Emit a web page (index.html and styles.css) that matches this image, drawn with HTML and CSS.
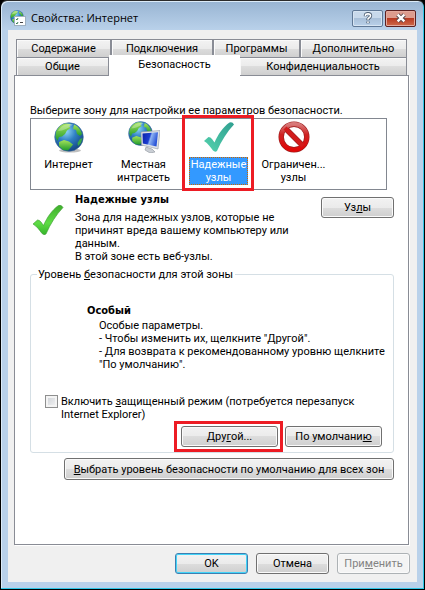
FILE: index.html
```html
<!DOCTYPE html>
<html lang="ru">
<head>
    <meta charset="UTF-8">
    <meta name="viewport" content="width=device-width, initial-scale=1.0">
    <title>Свойства: Интернет</title>
    <link rel="stylesheet" href="styles.css">
</head>
<body>

<!-- shared shapes -->
<svg class="defs" width="0" height="0" aria-hidden="true">
    <defs>
        <radialGradient id="sea" cx="0.4" cy="0.3" r="0.75">
            <stop offset="0" stop-color="#8fd6f5"/>
            <stop offset="0.45" stop-color="#2f7fc4"/>
            <stop offset="1" stop-color="#123f7c"/>
        </radialGradient>
        <linearGradient id="land" x1="0" y1="0" x2="0" y2="1">
            <stop offset="0" stop-color="#a5e35a"/>
            <stop offset="1" stop-color="#1f9a2c"/>
        </linearGradient>
        <linearGradient id="screen" x1="0" y1="0" x2="1" y2="0.3">
            <stop offset="0" stop-color="#0a1fa8"/>
            <stop offset="0.5" stop-color="#1c3fd0"/>
            <stop offset="0.6" stop-color="#8fb4f2"/>
            <stop offset="1" stop-color="#2a55d8"/>
        </linearGradient>
        <linearGradient id="teal" x1="0" y1="1" x2="1" y2="0">
            <stop offset="0" stop-color="#55d3ae"/>
            <stop offset="1" stop-color="#2f9f90"/>
        </linearGradient>
        <linearGradient id="green" x1="0" y1="0" x2="0" y2="1">
            <stop offset="0" stop-color="#3fae2c"/>
            <stop offset="0.6" stop-color="#5fdc45"/>
            <stop offset="1" stop-color="#35b52a"/>
        </linearGradient>
        <linearGradient id="red" x1="0" y1="0" x2="0" y2="1">
            <stop offset="0" stop-color="#d87a7a"/>
            <stop offset="0.4" stop-color="#cf2323"/>
            <stop offset="1" stop-color="#e00808"/>
        </linearGradient>
        <symbol id="globe" viewBox="0 0 30 30">
            <circle cx="15" cy="15" r="14.3" fill="url(#sea)" stroke="#3a6a9c" stroke-width="0.6"/>
            <path d="M2 10C4 5 8 2 12 1.500L17 2L15 4.500L16.500 6L13 8.500L11 12L8 14.500L5 15L3.500 19L1.500 15Z" fill="url(#land)"/>
            <path d="M20 2.500C24 4 27 8 28 12L26 14L23 12L22 8L19 7Z" fill="url(#land)"/>
            <path d="M5 20L10 18L15 19.500L19 22.500L17 25L14 28.500L9 28L5 24Z" fill="url(#land)"/>
            <path d="M26 17L28.500 16L27 21L24 24L23.500 21Z" fill="#38a84a"/>
            <path d="M4 9C7 3.500 13 1 19 2.500C15 6 9 9 4 9Z" fill="#ffffff" opacity="0.3"/>
        </symbol>
        <symbol id="tick" viewBox="0 0 32 32">
            <path d="M1 20L5.500 16Q7.500 16 9 18L11.500 21.500C15 13.500 20 6 26.500 1.500Q29.500 0.500 31 3.500C24 11 18.500 19.500 14 30Q12 31.500 10 29.500C7.500 26 5 22.500 1 20Z"/>
        </symbol>
    </defs>
</svg>

<div class="window">
    <header class="titlebar">
        <svg class="title-icon" viewBox="0 0 16 16" aria-hidden="true">
            <use href="#globe" x="0" y="0" width="14" height="14"/>
            <rect x="4.500" y="6.500" width="11" height="9" fill="#fff" stroke="#9fb0bf"/>
            <path d="M6 9l1 1 1-2M6 13l1 1 1-2" fill="none" stroke="#3d7f55"/>
            <path d="M10 12.500h3" stroke="#444"/>
        </svg>
        <h1 class="title">Свойства: Интернет</h1>
        <button class="caption-btn" type="button" aria-label="Справка">
            <svg width="14" height="12" viewBox="0 0 14 14">
                <path d="M4 5V4Q4 2 7 2T10 4.500Q10 6 8 7L7 8.500V9.500M7 11V13" fill="none" stroke="#4e5f73" stroke-width="3.800"/>
                <path d="M4 4.700V4Q4 2.200 7 2.200T10 4.500Q10 6 8 7L7 8V9M7 11.200V12.800" fill="none" stroke="#fff" stroke-width="1.800"/>
            </svg>
        </button>
        <button class="caption-btn close" type="button" aria-label="Закрыть">
            <svg width="12" height="10" viewBox="0 0 14 12">
                <path d="M3 2L11 10M11 2L3 10" stroke="#53464b" stroke-width="5"/>
                <path d="M3 2L11 10M11 2L3 10" stroke="#fff" stroke-width="2.800"/>
            </svg>
        </button>
    </header>

    <main class="client">
        <div class="tabs" role="tablist">
            <div class="tab-row back">
                <button class="tab" type="button" role="tab">Содержание</button>
                <button class="tab" type="button" role="tab">Подключения</button>
                <button class="tab" type="button" role="tab">Программы</button>
                <button class="tab" type="button" role="tab">Дополнительно</button>
            </div>
            <div class="tab-row front">
                <button class="tab" type="button" role="tab">Общие</button>
                <button class="tab selected" type="button" role="tab" aria-selected="true">Безопасность</button>
                <button class="tab" type="button" role="tab">Конфиденциальность</button>
            </div>
        </div>

        <section class="panel" role="tabpanel">
            <p class="prompt">Выберите зону для настройки ее параметров безопасности.</p>
            <ul class="zones">
                <li class="zone">
                    <svg class="zone-icon" viewBox="0 0 32 32" aria-hidden="true">
                        <ellipse cx="17" cy="29.500" rx="11" ry="2" fill="#000" opacity="0.25"/>
                        <use href="#globe" x="1" y="1" width="30" height="30"/>
                    </svg>
                    <span class="zone-name">Интернет</span>
                </li>
                <li class="zone">
                    <svg class="zone-icon" viewBox="0 0 32 32" aria-hidden="true">
                        <use href="#globe" x="0" y="0" width="25" height="25"/>
                        <path d="M18 26L24 28L27 31L22 32L17 29Z" fill="#c9ced4" stroke="#8d949c" stroke-width="0.600"/>
                        <path d="M13 11L32 9.500L30 28L13.500 24Z" fill="#dfe3e8" stroke="#9098a2" stroke-width="0.600"/>
                        <path d="M14.500 12.500L30 11.300L28.500 25.500L14.800 22.500Z" fill="url(#screen)"/>
                    </svg>
                    <span class="zone-name">Местная<br>интрасеть</span>
                </li>
                <li class="zone selected">
                    <svg class="zone-icon" viewBox="0 0 32 32" fill="url(#teal)" aria-hidden="true">
                        <use href="#tick" width="32" height="32"/>
                    </svg>
                    <span class="zone-name">Надежные<br>узлы</span>
                </li>
                <li class="zone">
                    <svg class="zone-icon" viewBox="0 0 32 32" fill="none" aria-hidden="true">
                        <circle cx="16" cy="16" r="12.800" fill="#fff" stroke="#9c1d1d" stroke-width="5.400"/>
                        <path d="M7 7L25 25" stroke="#9c1d1d" stroke-width="5.400"/>
                        <circle cx="16" cy="16" r="12.800" stroke="url(#red)" stroke-width="4.200"/>
                        <path d="M7 7L25 25" stroke="#d21c1c" stroke-width="4.200"/>
                    </svg>
                    <span class="zone-name">Ограничен...<br>узлы</span>
                </li>
            </ul>

            <div class="zone-info">
                <svg class="info-icon" viewBox="0 0 32 32" fill="url(#green)" stroke="#3a9a30" stroke-width="0.600" aria-hidden="true">
                    <use href="#tick" width="32" height="32"/>
                </svg>
                <div class="info-text">
                    <h2>Надежные узлы</h2>
                    <p>Зона для надежных узлов, которые не<br>причинят вреда вашему компьютеру или<br>данным.<br>В этой зоне есть веб-узлы.</p>
                </div>
                <button class="btn" type="button">Уз<u>л</u>ы</button>
            </div>

            <fieldset class="level">
                <legend>Уровень <u>б</u>езопасности для этой зоны</legend>
                <div class="level-text">
                    <h2>Особый</h2>
                    <p>Особые параметры.<br>- Чтобы изменить их, щелкните "Другой".<br>- Для возврата к рекомендованному уровню щелкните<br>"По умолчанию".</p>
                </div>
                <div class="protect">
                    <input type="checkbox" id="protect">
                    <label for="protect">Включить <u>з</u>ащищенный режим (потребуется перезапуск<br>Internet Explorer)</label>
                </div>
                <div class="level-buttons">
                    <button class="btn wide marked" type="button">Дру<u>г</u>ой...</button>
                    <button class="btn wide" type="button">По умолчани<u>ю</u></button>
                </div>
            </fieldset>
            <button class="btn reset-all" type="button"><u>В</u>ыбрать уровень безопасности по умолчанию для всех зон</button>
        </section>

        <footer class="actions">
            <button class="btn default" type="button">OK</button>
            <button class="btn" type="button">Отмена</button>
            <button class="btn" type="button" disabled>При<u>м</u>енить</button>
        </footer>
    </main>
</div>

</body>
</html>
```
FILE: styles.css
```css
* {
    margin: 0;
    padding: 0;
    box-sizing: border-box;
}

body {
    background: #000;
    color: #000;
    font-family: Roboto, sans-serif;
    font-size: 11px;
    line-height: 13px;
}

button {
    font: inherit;
    color: inherit;
    white-space: nowrap;
}

.defs {
    position: absolute;
}

/* window frame */
.window {
    min-height: 100vh;
    display: flex;
    flex-direction: column;
    padding: 0 6px 6px 7px;
    border: 1px solid #000;
    border-top-color: #2b2b2b;
    border-radius: 7px 7px 0 0;
    background: linear-gradient(#98b4d2, #b9d1ea 29px);
    box-shadow: inset -1px -1px 0 #2fc5e6, inset 1px 1px 0 #dcebf8;
}

.titlebar {
    height: 29px;
    display: flex;
    align-items: center;
    gap: 2px;
    padding: 8px 2px 3px 2px;
}

.title-icon {
    width: 16px;
    height: 16px;
    flex: none;
}

.title {
    flex: 1;
    padding-left: 3px;
    font-family: "Open Sans", "Noto Sans", sans-serif;
    font-size: 11px;
    line-height: 16px;
    font-weight: 400;
}

.caption-btn {
    width: 31px;
    height: 17px;
    display: flex;
    align-items: center;
    justify-content: center;
    border: 1px solid #5f7896;
    border-radius: 2px;
    background: linear-gradient(#c8d9eb 50%, #a9c0d9 50%, #b9d1ea);
    box-shadow: inset 0 0 0 1px #d6e4f2;
}

.caption-btn.close {
    border-color: #5c2020;
    background: linear-gradient(#dd9c8e 50%, #b83a22 50%, #cf6a4a);
    box-shadow: inset 0 0 0 1px #e3a99d;
}

.client {
    flex: 1;
    display: flex;
    flex-direction: column;
    margin-right: 1px;
    margin-bottom: 1px;
    padding: 9px 7px 8px 6px;
    background: #f0f0f0;
}

/* tabs */
.tabs {
    padding: 0 3px 0 2px;
}

.tab-row {
    display: grid;
    align-items: end;
}

.tab-row.back {
    grid-template-columns: 95fr 102fr 87fr 107fr;
}

.tab-row.front {
    grid-template-columns: 93fr 131fr 167fr;
}

.tab {
    height: 18px;
    border: 1px solid #898c95;
    border-bottom: 0;
    background: linear-gradient(#f3f3f3, #ebebeb 50%, #dddddd 50%, #cfcfcf);
    box-shadow: inset 1px 1px 0 #fafafa;
}

.tab + .tab {
    border-left-width: 0;
}

.back .tab + .tab {
    border-left-width: 1px;
}

.front .tab {
    position: relative;
}

.front .tab.selected {
    height: 21px;
    margin: -3px 0 -1px;
    padding-bottom: 2px;
    border: 0;
    background: #fff;
    box-shadow: none;
    z-index: 1;
}

.panel {
    flex: 1;
    display: flex;
    flex-direction: column;
    margin-right: 1px;
    padding: 28px 14px 0 15px;
    border: 1px solid #898c95;
    background: #fff;
    box-shadow: 1px 1px 0 #fff;
}

/* zone list */
.zones {
    display: flex;
    margin-right: 7px;
    margin-top: 1px;
    height: 72px;
    padding-top: 2px;
    border: 1px solid #828790;
    list-style: none;
}

.zone {
    position: relative;
    width: 75px;
    display: flex;
    flex-direction: column;
    align-items: center;
    gap: 4px;
    text-align: center;
}

.zone-icon {
    width: 32px;
    height: 32px;
}

.zone-name {
    padding: 0 1px;
    border: 1px solid transparent;
    white-space: nowrap;
}

.zone.selected .zone-name {
    border: 1px dotted #cc6600;
    background: #3399ff;
    color: #fff;
}

/* red callout frames */
.zone.selected::after,
.marked::after {
    content: "";
    position: absolute;
    border: 3px solid #ed1c24;
}

.zone.selected::after {
    inset: -6px 2px -2px 1px;
}

.marked::after {
    inset: -6px -6px -6px -8px;
}

/* zone description */
.zone-info {
    display: flex;
    align-items: flex-start;
    padding-top: 3px;
}

.info-icon {
    width: 32px;
    height: 32px;
    margin: 11px 11px 0 2px;
    flex: none;
}

h2 {
    font-size: 11px;
    line-height: 13px;
    font-family: "DejaVu Sans Condensed", "DejaVu Sans", sans-serif;
    font-weight: 700;
}

.info-text {
    flex: 1;
}

.info-text p {
    margin-top: 5px;
}

.btn {
    position: relative;
    width: 73px;
    height: 21px;
    border: 1px solid #707070;
    border-radius: 3px;
    background: linear-gradient(#f2f2f2, #ebebeb 50%, #dddddd 50%, #cfcfcf);
    box-shadow: inset 0 0 0 1px #fafafa;
}

.zone-info .btn {
    margin-top: 4px;
}

.btn.wide {
    width: 97px;
}

.btn.default {
    border-color: #3c7fb1;
    box-shadow: inset 0 0 0 1px #43d4f8;
}

.btn:disabled {
    border-color: #adb2b5;
    background: #f4f4f4;
    color: #838383;
}

/* security level */
.level {
    min-width: 0;
    margin-top: 5px;
    padding: 0 11px 5px 14px;
    border: 1px solid #d5dfe5;
    border-radius: 3px;
}

.level legend {
    margin-left: -8px;
    padding: 0 2px 0 1px;
}

.level-text {
    padding: 23px 0 0 42px;
}

.level-text p {
    padding-left: 12px;
    margin-top: 2px;
    white-space: nowrap;
}

.protect {
    display: flex;
    gap: 3px;
    margin-top: 24px;
    align-items: flex-start;
}

.protect input {
    appearance: none;
    flex: none;
    width: 13px;
    height: 13px;
    border: 1px solid #8e8f8f;
    background: linear-gradient(135deg, #cbcfd5, #f6f6f6);
    box-shadow: inset 0 0 0 2px #f4f4f4;
}

.level-buttons {
    display: flex;
    justify-content: flex-end;
    gap: 7px;
    margin-top: 5px;
}

.reset-all {
    align-self: flex-end;
    width: 330px;
    height: 22px;
    margin-top: 5px;
}

.actions {
    display: flex;
    justify-content: flex-end;
    gap: 8px;
    padding-top: 8px;
}
```
